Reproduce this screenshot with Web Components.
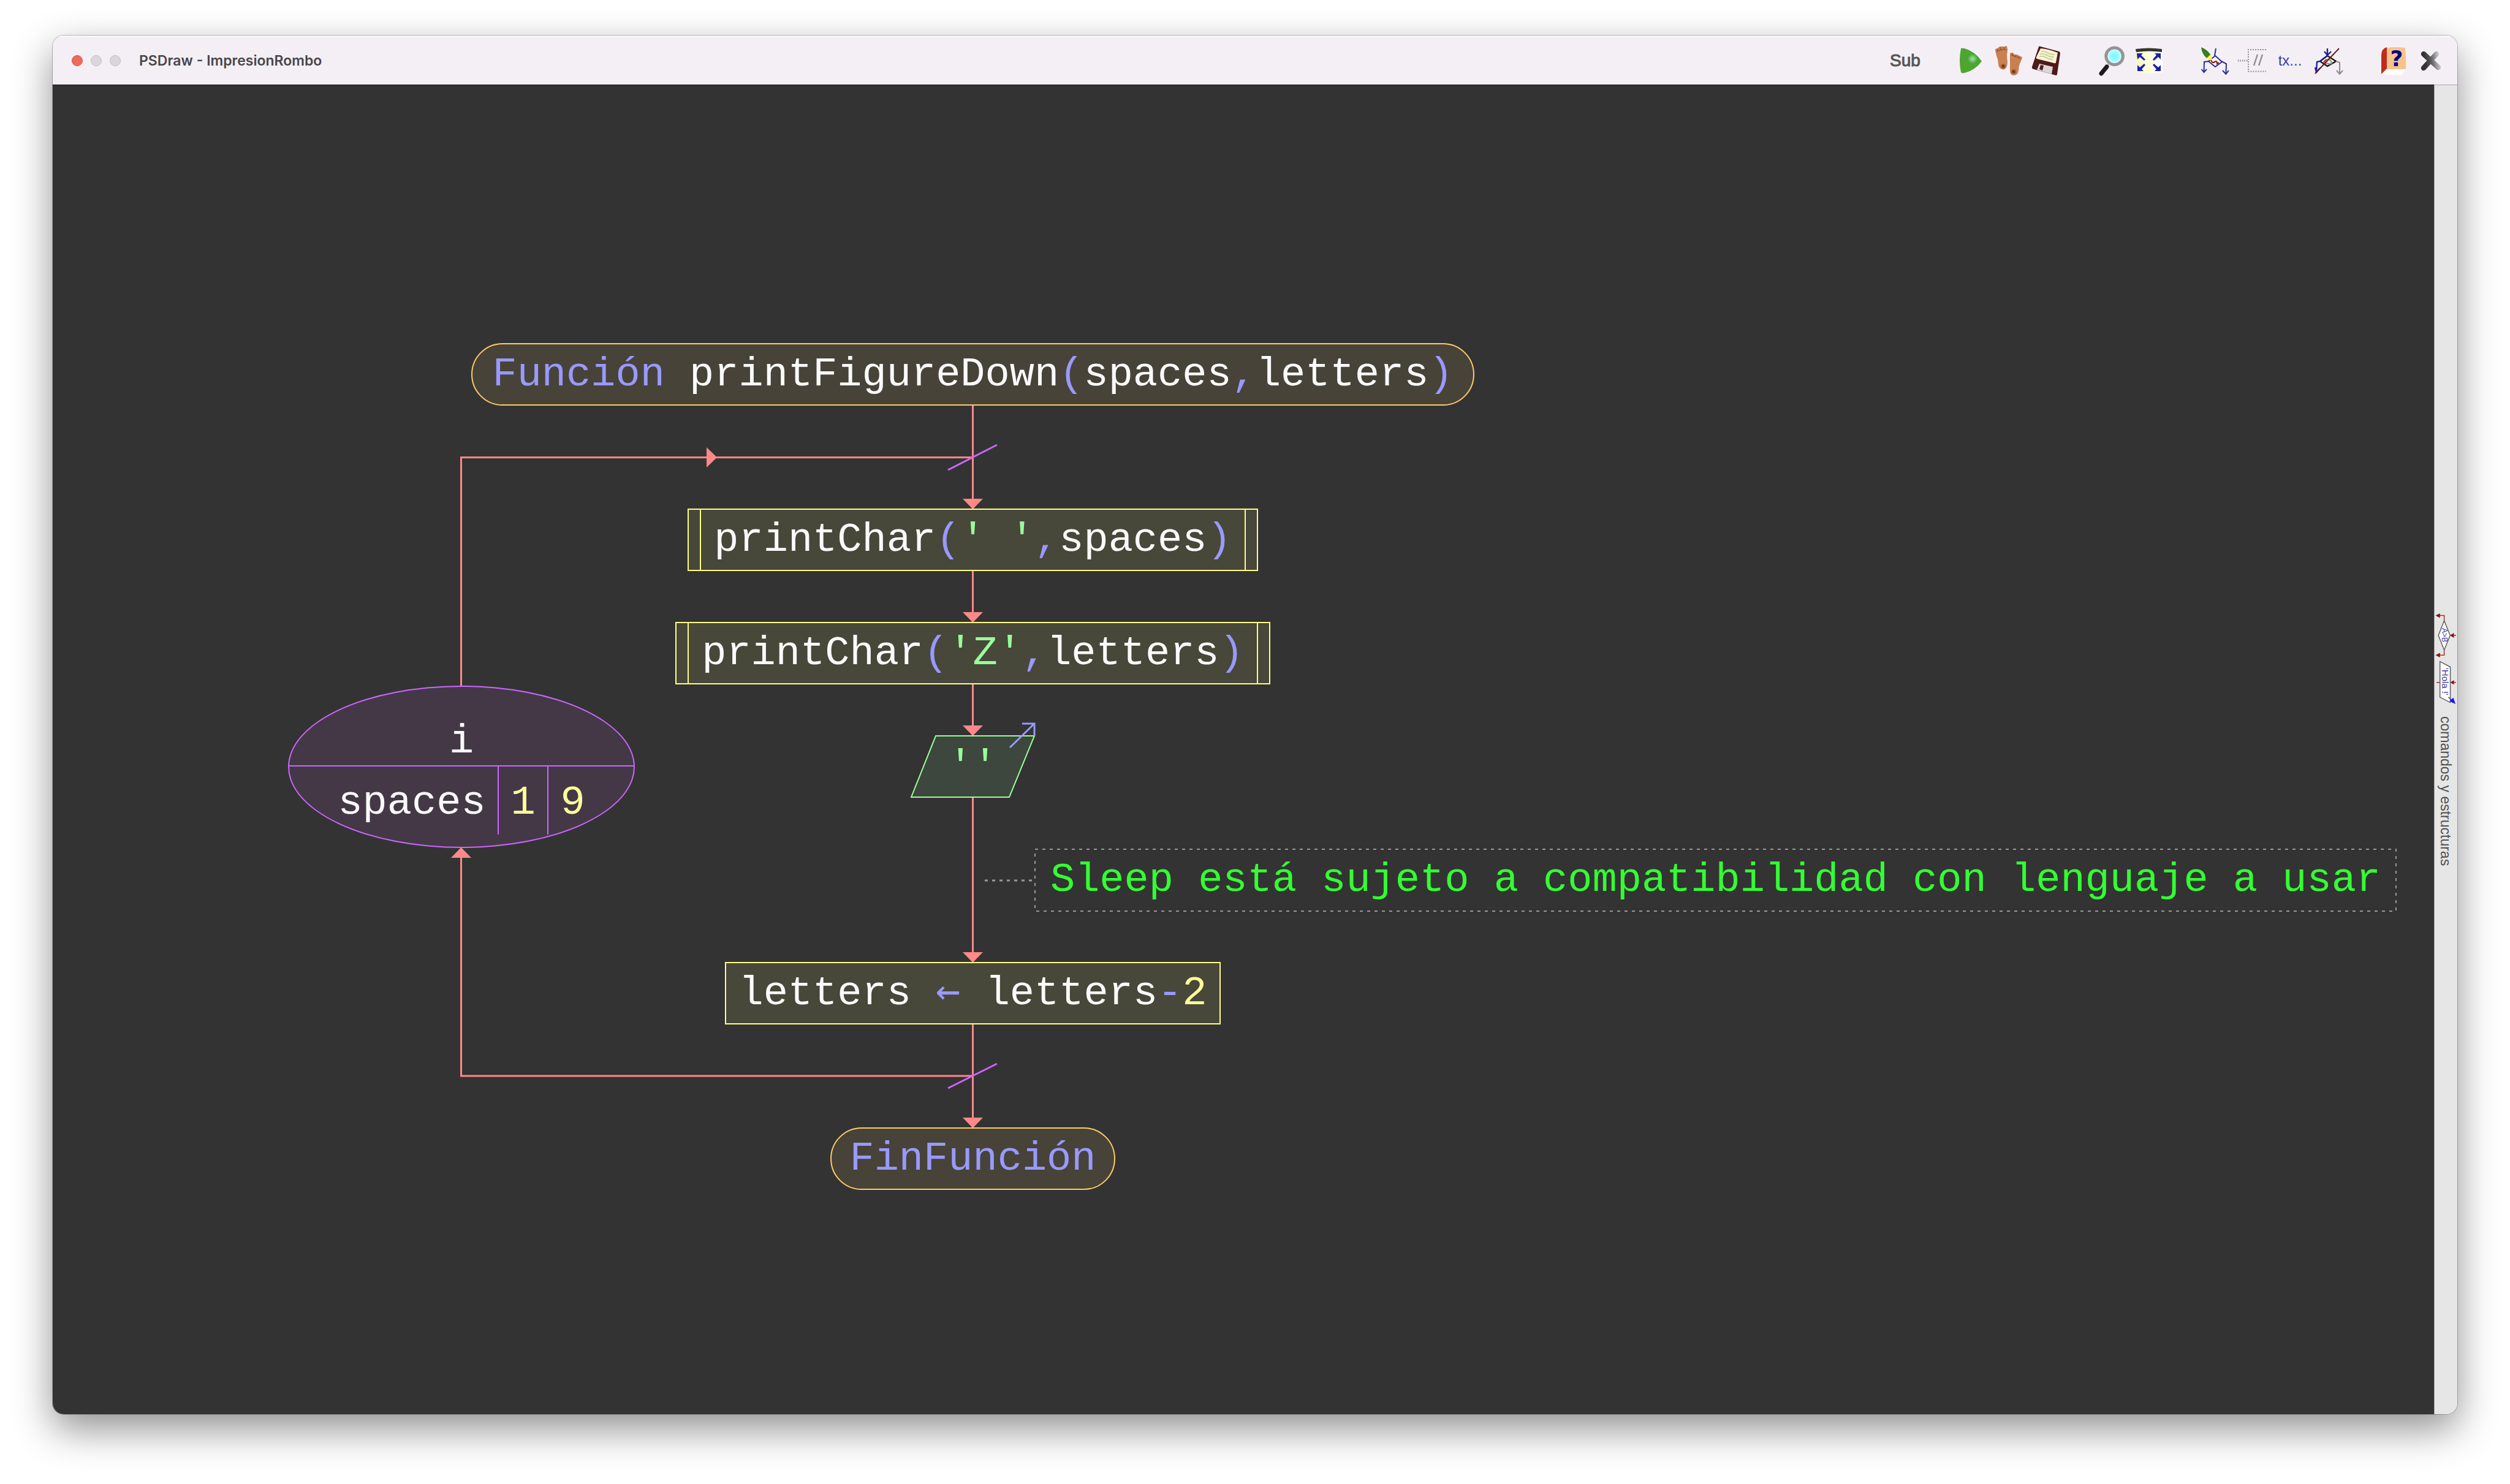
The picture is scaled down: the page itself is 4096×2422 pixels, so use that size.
<!DOCTYPE html>
<html lang="es">
<head>
<meta charset="utf-8">
<title>PSDraw - ImpresionRombo</title>
<style>
  html, body { margin: 0; background: #fff; }
  body { font-family: "Liberation Sans", sans-serif; }
</style>
</head>
<body>
<ps-app></ps-app>

<template id="app">
  <style>
    :host { display: flex; box-sizing: border-box; min-height: 100vh; padding: 58px 86px 114px; }
    main { flex: 1; min-width: 0; display: flex; flex-direction: column; border-radius: 18px; overflow: hidden;
      box-shadow: 0 0 0 1px rgba(0,0,0,.24), 0 24px 64px rgba(0,0,0,.44); }
    .body { flex: 1; display: flex; min-height: 0; }
    flow-canvas { flex: 1; min-width: 0; }
  </style>
  <main>
    <title-bar>PSDraw - ImpresionRombo</title-bar>
    <div class="body">
      <flow-canvas>
        <flow-node kind="terminal" x="683" y="422" w="1637"><span class="key">Función</span> printFigureDown<span class="key">(</span>spaces<span class="key">,</span>letters<span class="key">)</span></flow-node>
        <flow-node kind="call" x="1036" y="692" w="931">printChar<span class="key">(</span><span class="str">' '</span><span class="key">,</span>spaces<span class="key">)</span></flow-node>
        <flow-node kind="call" x="1016" y="877" w="971">printChar<span class="key">(</span><span class="str">'Z'</span><span class="key">,</span>letters<span class="key">)</span></flow-node>
        <output-node x="1400" y="1062" w="203"><span class="str">''</span></output-node>
        <comment-node x="1602" y="1247" w="2223">Sleep está sujeto a compatibilidad con lenguaje a usar</comment-node>
        <flow-node kind="step" x="1097" y="1432" w="809">letters <span class="key arrow">←</span> letters<span class="key">-</span><span class="num">2</span></flow-node>
        <flow-node kind="terminal" x="1269" y="1702" w="465"><span class="key">FinFunción</span></flow-node>
        <loop-node x="384" y="981" w="566"><span slot="name">i</span><span slot="to">spaces</span><span slot="step" class="num">1</span><span slot="id" class="num">9</span></loop-node>
      </flow-canvas>
      <side-tab>comandos y estructuras</side-tab>
    </div>
  </main>
</template>

<template id="bar">
  <style>
    :host { display: flex; align-items: center; height: 80px; box-sizing: border-box; padding: 0 12px 0 31px;
      background: #f4eff5; border-top: 2px solid #fbf9fb; }
    .lights { display: flex; gap: 13px; margin-right: 30px; }
    .lights button { width: 18px; height: 18px; padding: 0; border-radius: 50%; background: #dad6dc; border: 1px solid #c2bec4; }
    .lights .close { background: #ed6a5e; border-color: #d9574c; }
    h1 { margin: 0; flex: 1; font: 600 23px/30px Inter, "Liberation Sans", sans-serif; color: #48464a; }
    nav { display: flex; gap: 44px; }
    nav div { display: flex; }
  </style>
  <div class="lights"><button class="close" aria-label="Cerrar ventana"></button><button aria-label="Minimizar"></button><button aria-label="Ampliar"></button></div>
  <h1><slot></slot></h1>
  <nav>
    <div><tool-button><span class="sub">Sub</span></tool-button></div>
    <div>
      <tool-button label="Ejecutar"><svg viewBox="0 0 48 48"><defs><radialGradient id="g" gradientUnits="userSpaceOnUse" cx="28" cy="21" r="8"><stop offset="0" stop-color="#9fe0b4"/><stop offset="1" stop-color="#4da62f"/></radialGradient></defs><path d="M9 4Q11 3 15 4Q32 9 43 25Q32 40 15 44Q10 45 9 43Q5 24 9 4Z" fill="url(#g)"/></svg></tool-button>
      <tool-button label="Paso a paso"><svg viewBox="0 0 48 48"><path d="M3 7Q3 4 6 4L9 2Q12 0 14 1L18 1Q21-1 22 1Q24 6 22 14Q22 20 23 26Q23 38 16 38.500Q9 38 8 30Q8 23 5 16Z" fill="#c98152"/><path d="M27 13Q28 10 31 11L35 14L39 14L42 16L45 17Q48 18 46 22L43 29Q41 34 41 40Q40 48 33 48Q27 48 27 40Z" fill="#c98152"/><path d="M5 10Q9 6 12 7Q16 4 21 7M6 5L7 8M11 2L12 6M17 2L18 5M29 15Q34 16 37 18Q41 18 44 21M31 12L31 15M36 15L36 17M41 17L40 19" fill="none" stroke="#955a37" stroke-width="1.600"/><circle cx="16" cy="33" r="4" fill="#a0623a"/><circle cx="33" cy="42" r="4" fill="#a0623a"/><circle cx="16" cy="33" r="2" fill="#603018"/><circle cx="33" cy="42" r="2" fill="#603018"/></svg></tool-button>
      <tool-button label="Guardar"><svg viewBox="0 0 48 48"><path d="M12 1Q13 0 15 1L45 9Q47 10 47 12L42 46Q42 48 40 48L4 38Q0 37 1 34Z" fill="#4f1a1c"/><path d="M15 4Q28 5 43 11L40 27Q39 29 37 28L9 21Q7 20 8 18Z" fill="#fbf4d0"/><path d="M16 9Q21 8 26 11T38 14M14 13Q20 12 25 15T37 18M13 17Q19 16 24 19T35 22" fill="none" stroke="#bccb9c" stroke-width="1.700"/><path d="M13 29L35 34L33 46L9 39Z" fill="#ddd5d6"/><path d="M15 31L20 32L18 40L13 38Z" fill="#4f1a1c"/></svg></tool-button>
    </div>
    <div>
      <tool-button label="Buscar"><svg viewBox="0 0 48 48"><defs><radialGradient id="l"><stop offset="0" stop-color="#6ffcff"/><stop offset=".55" stop-color="#9dfaff"/><stop offset="1" stop-color="#fff"/></radialGradient></defs><path d="M20 30L16 35" stroke="#bbb" stroke-width="3"/><path d="M17 34L8 45" stroke="#1b1b1b" stroke-width="7" stroke-linecap="round"/><circle cx="29.600" cy="16.700" r="13.800" fill="url(#l)" stroke="#949494" stroke-width="5"/></svg></tool-button>
      <tool-button label="Ver todo"><svg viewBox="0 0 48 48"><defs><linearGradient id="y"><stop offset="0" stop-color="#faf8bd"/><stop offset=".35" stop-color="#fdfcd2"/><stop offset="1" stop-color="#fff"/></linearGradient></defs><path d="M3 9Q24 4 46 9V43Q24 47 4 43Z" fill="url(#y)"/><path d="M2 5Q24 2 45 5V10Q24 7 3 10Z" fill="#33342c"/><path d="M4 12H14L11 15L18 22L16 24L9 18L5 22ZM43 12H33L36 15L30 22L32 24L39 18L43 22ZM5 41H15L12 38L18 31L16 29L9 35L5 31ZM43 41H33L36 38L30 31L32 29L39 35L43 31Z" fill="#1b1fae"/></svg></tool-button>
    </div>
    <div>
      <tool-button label="Estilo"><svg viewBox="0 0 48 48"><g fill="none" stroke="#2a2f9c" stroke-width="2"><path d="M26 16L37 26L26 34L15 25Z" fill="#fff"/><path d="M27 4L25 16M16 25L8 26L7.500 43M36 25L44 29L43.400 46M3.500 38L7.500 43L12 38M38 40L43.400 46L48 40"/></g><path d="M3 2Q12 5 19 15L12 20Q4 13 3 2Z" fill="#3b7d21"/><path d="M18 14L21 22L19 24L12 20Z" fill="#ffff3d"/><path d="M19 23Q21 29 25 26T29 29L32 27" fill="none" stroke="#8f1c12" stroke-width="2.200"/></svg></tool-button>
      <tool-button label="Comentarios"><svg viewBox="0 0 48 48"><g fill="none" stroke="#909090" stroke-width="2"><path d="M47 6H18V41.500H47" stroke-dasharray="2 2"/><path d="M1 24H17" stroke-width="3" stroke-dasharray="1.500 2"/><path d="M33 14L27 32M41 14L35 32" stroke-width="2.400"/></g></svg></tool-button>
      <tool-button><span class="tx">tx...</span></tool-button>
      <tool-button label="Ocultar"><svg viewBox="0 0 48 48"><g fill="none" stroke-width="2.400"><path d="M23 16L37 25L23 33L11 25Z" fill="#fffbe0" stroke="#1a1a1a"/><path d="M37 25L43 27V46M38 40L43 46L48 40" stroke="#8b8b8b" stroke-width="2"/><path d="M23 4V15M18 9L23 15L29 9M23 16L11 25L6 26L5 42M3 35L5 43L11 36" stroke="#1c22a0"/><path d="M20 24Q25 19 29 25T20 28" stroke="#999"/><path d="M17 27L21 22" stroke="#b33" /><path d="M42 4L3 45" stroke="#611a22" stroke-width="2"/></g></svg></tool-button>
    </div>
    <div>
      <tool-button label="Ayuda"><svg viewBox="0 0 48 48"><path d="M14 36L45 37L38 47H5Z" fill="#fff"/><path d="M14 3Q30 1 44 3Q46 20 45 38H14Z" fill="#f6c38d"/><path d="M14 2Q5 4 5 16V46L14 37Z" fill="#c22a1c"/><text x="30" y="33" text-anchor="middle" font-family="DejaVu Sans" font-weight="700" font-size="36" fill="#000080">?</text></svg></tool-button>
      <tool-button label="Cerrar"><svg viewBox="0 0 48 48"><defs><linearGradient id="x" gradientUnits="userSpaceOnUse" x1="14" y1="24" x2="38" y2="20"><stop offset="0" stop-color="#333"/><stop offset=".4" stop-color="#5a5a5a"/><stop offset="1" stop-color="#d0ced2"/></linearGradient></defs><path d="M12 13L36 35M33 13L12 36" stroke="url(#x)" stroke-width="8.500" stroke-linecap="round"/></svg></tool-button>
    </div>
  </nav>
</template>

<template id="tool">
  <style>
    :host { display: block; }
    button { display: flex; align-items: center; justify-content: center; width: 62px; height: 60px; padding: 0; border: 0; background: none; }
    ::slotted(svg) { width: 48px; height: 48px; overflow: visible; }
    ::slotted(.sub) { font: 28px/40px "Liberation Sans", sans-serif; color: #555; -webkit-text-stroke: 1px #555; }
    ::slotted(.tx) { font: 24px/30px "Liberation Sans", sans-serif; color: #3c42a4; }
  </style>
  <button><slot></slot></button>
</template>

<template id="canvas">
  <style>
    :host { display: block; position: relative; background: #333; box-shadow: inset 0 1px #111; overflow: hidden; min-height: 1900px; }
    svg { position: absolute; left: 0; top: 0; width: 100%; height: 100%; }
    .wire { fill: none; stroke: #ff8888; stroke-width: 3; }
    .tip { fill: #ff8888; }
    .mark { stroke: #cc66ff; stroke-width: 3; }
    .note { stroke: #999; stroke-width: 3; stroke-dasharray: 5 7; }
  </style>
  <svg aria-hidden="true">
    <path class="wire" d="M1501.500 524V1703M1501 1618H666.500V1245M666.500 983V608.500H1501"/>
    <path class="tip" d="M1485 676h33l-16.500 17zM1485 861h33l-16.500 17zM1485 1046h33l-16.500 17zM1485 1416h33l-16.500 17zM1485 1686h33l-16.500 17zM1067 592v33l17-16.500zM650 1262h33l-16.500-17z"/>
    <path class="mark" d="M1461 629L1541 588M1461 1638L1541 1598"/>
    <path class="note" d="M1521 1299H1600"/>
  </svg>
  <slot></slot>
</template>

<template id="node">
  <style>
    :host { position: absolute; box-sizing: border-box; height: 102px; border: 2px solid var(--line);
      background: var(--fill); color: #fafafa; text-align: center; font: 67px/98px "Liberation Mono", monospace; }
    :host([kind=terminal]) { --line: #ffcc66; --fill: #474338; border-radius: 51px; }
    :host([kind=call]), :host([kind=step]) { --line: #ffff88; --fill: #47473a; }
    :host([kind=call])::before, :host([kind=call])::after { content: ""; position: absolute; top: 0; bottom: 0; width: 2px; background: var(--line); }
    :host([kind=call])::before { left: 18px; }
    :host([kind=call])::after { right: 18px; }
    slot { white-space: pre; }
    ::slotted(.key) { color: #9999ff; }
    ::slotted(.str) { color: #99ff99; }
    ::slotted(.num) { color: #ffff99; }
    ::slotted(.arrow) { font-family: "DejaVu Sans Mono"; line-height: 0; }
  </style>
  <slot></slot>
</template>

<template id="output">
  <style>
    :host { position: absolute; height: 102px; text-align: center; font: 67px/102px "Liberation Mono", monospace; }
    svg { position: absolute; left: 0; top: 0; overflow: visible; }
    ::slotted(.str) { position: relative; color: #99ff99; }
  </style>
  <svg width="203" height="102" aria-hidden="true">
    <path d="M41 1H202L161 101H1Z" fill="#3d473d" stroke="#99ff99" stroke-width="2"/>
    <path d="M162 20L202 -19M182 -19H202V1" fill="none" stroke="#9999ff" stroke-width="3"/>
  </svg>
  <slot></slot>
</template>

<template id="comment">
  <style>
    :host { position: absolute; height: 103px; text-align: center; white-space: nowrap; color: #33ff33;
      font: 67px/102px "Liberation Mono", monospace; }
    svg { position: absolute; left: 0; top: 0; width: 100%; height: 100%; overflow: visible; }
    rect { fill: none; stroke: #999; stroke-width: 2; stroke-dasharray: 5 7; }
  </style>
  <svg aria-hidden="true"><rect x="1" y="1" width="2221" height="101"/></svg>
  <slot></slot>
</template>

<template id="loop">
  <style>
    :host { position: absolute; box-sizing: border-box; height: 265px; border: 2px solid #cc66ff; border-radius: 50%;
      background: #443847; color: #fafafa; text-align: center; font: 67px/98px "Liberation Mono", monospace; }
    .name { height: 130px; box-sizing: border-box; padding-top: 40px; border-bottom: 2px solid #cc66ff; }
    .row { display: flex; justify-content: center; }
    .row div { width: 79px; height: 111px; box-sizing: content-box; line-height: 118px; border-left: 2px solid #cc66ff; }
    .row .wide { width: 280px; border: 0; }
    ::slotted(.num) { color: #ffff99; }
  </style>
  <div class="name"><slot name="name"></slot></div>
  <div class="row"><div class="wide"><slot name="to"></slot></div><div><slot name="step"></slot></div><div><slot name="id"></slot></div></div>
</template>

<template id="side">
  <style>
    :host { display: flex; width: 38px; background: #e6e6e6; box-shadow: inset 1px 1px #aaa; }
    button { flex: 1; display: flex; flex-direction: column; align-items: center; justify-content: center; gap: 18px;
      padding: 0 0 35px; border: 0; background: none; }
    .label { writing-mode: vertical-rl; font: 23px/38px "Liberation Sans", sans-serif; color: #505050; }
    svg { width: 38px; height: 154px; overflow: visible; }
    text { font-family: "Liberation Sans", sans-serif; fill: #3a35a8; }
  </style>
  <button>
    <svg viewBox="0 0 38 154" aria-hidden="true">
      <g fill="none" stroke="#a33030" stroke-width="1.500"><path d="M9 7.600H16.600V16M9 72.200H16.600V64M30 40H36M30 116.700H36M4 116.700H10"/></g>
      <path fill="#8e1014" d="M2.500 7.600L9.700 4V11.400ZM2.500 72.200L9.700 68.500V76ZM26 40L32.500 36V44ZM26.600 116.700L32.500 113V120.500Z"/>
      <path d="M16.600 16L26.300 40L16.600 64L7.200 40ZM9.700 82.700L26.600 91.500V149.600L9.700 140.800Z" fill="#fff" stroke="#606060" stroke-width="1.500"/>
      <text transform="translate(12.500 28) rotate(90)" font-size="12">A&gt;B</text>
      <text transform="translate(12.500 93) rotate(90)" font-size="15">'Hola !'</text>
      <path d="M23.500 141L29 146" stroke="#1414ff" stroke-width="1.500" stroke-dasharray="3 1"/>
      <path d="M35 152L25.500 147.500L31.500 141.500Z" fill="#1414ff"/>
    </svg>
    <span class="label"><slot></slot></span>
  </button>
</template>

<script>
  const define = (tag, id, setup) => customElements.define(tag, class extends HTMLElement {
    constructor() {
      super();
      this.attachShadow({ mode: "open" }).append(document.getElementById(id).content.cloneNode(true));
    }
    connectedCallback() { if (setup) setup(this); }
  });
  // Diagram shapes take their place on the free canvas from x, y and w.
  const place = el => {
    el.style.left = el.getAttribute("x") + "px";
    el.style.top = el.getAttribute("y") + "px";
    el.style.width = el.getAttribute("w") + "px";
  };
  define("tool-button", "tool", el => {
    const label = el.getAttribute("label");
    if (label) el.shadowRoot.querySelector("button").setAttribute("aria-label", label);
  });
  define("title-bar", "bar");
  define("flow-node", "node", place);
  define("output-node", "output", place);
  define("comment-node", "comment", place);
  define("loop-node", "loop", place);
  define("flow-canvas", "canvas");
  define("side-tab", "side");
  define("ps-app", "app");
</script>
</body>
</html>
